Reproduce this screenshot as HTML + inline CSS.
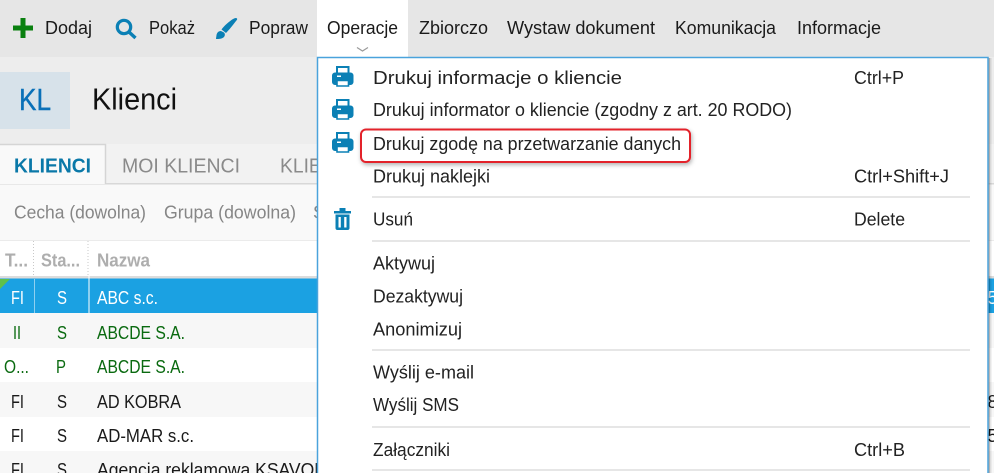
<!DOCTYPE html>
<html><head><meta charset="utf-8"><style>
html,body{margin:0;padding:0;background:#fff;width:994px;height:473px;overflow:hidden}
svg{display:block}
text{font-family:"Liberation Sans",sans-serif;font-size:18px;fill:#1a1a1a}
.m{fill:#222}
.g{fill:#0a6a10}
.w{fill:#fff}
.s{stroke:#e6e6e6;stroke-width:2}
</style></head><body>
<svg width="994" height="473" viewBox="0 0 994 473" xmlns="http://www.w3.org/2000/svg">
<defs>
<g id="pr"><path fill="#fff" stroke="#0b80b5" stroke-width="2" d="M5 1h11.500v8H5z"/>
<path fill="#0b80b5" d="M3 6.500h15.500a3 3 0 0 1 3 3v6.500a3 3 0 0 1-3 3H3a3 3 0 0 1-3-3V9.500a3 3 0 0 1 3-3z"/>
<path fill="#fff" stroke="#0b80b5" stroke-width="1.600" d="M5 14.500h11.500v5.500H5z"/>
<rect x="5" y="9.500" width="4" height="1.500" fill="#fff"/></g>
<filter id="sh" x="-5%" y="-30%" width="110%" height="170%"><feDropShadow dx="1" dy="2" stdDeviation="2" flood-color="#000" flood-opacity=".3"/></filter>
</defs>
<!-- top bar -->
<rect width="994" height="57" fill="#e6e6e6"/>
<rect x="317" width="91" height="57" fill="#fff"/>
<rect x="13" y="25.500" width="20" height="5" fill="#0a800f"/><rect x="20.500" y="18" width="5" height="20" fill="#0a800f"/>
<circle cx="124" cy="27" r="6.700" fill="none" stroke="#0b80b5" stroke-width="3.200"/><path d="M129 32l6.500 6" stroke="#0b80b5" stroke-width="3.400" fill="none"/>
<path fill="#0b80b5" d="M237 18.500c-1-1-2-.5-4 .5-4 2.500-9 7-11.500 10.500l4.500 3.500c3-3 7-8 10-12 1-1 1.500-2 1-2.500zM221 31c-3 0-4 2-4.500 4-.2 2-.5 3-.5 4 3 0 6 0 8-2 1.300-1.500 1-3.500 0-4.500z"/>
<text x="45" y="34" textLength="47" lengthAdjust="spacingAndGlyphs">Dodaj</text>
<text x="149" y="34" textLength="46" lengthAdjust="spacingAndGlyphs">Pokaż</text>
<text x="249" y="34" textLength="59" lengthAdjust="spacingAndGlyphs">Popraw</text>
<text x="327" y="34" textLength="71" lengthAdjust="spacingAndGlyphs">Operacje</text>
<text x="419" y="34" textLength="69" lengthAdjust="spacingAndGlyphs">Zbiorczo</text>
<text x="507" y="34" textLength="148" lengthAdjust="spacingAndGlyphs">Wystaw dokument</text>
<text x="675" y="34" textLength="101" lengthAdjust="spacingAndGlyphs">Komunikacja</text>
<text x="797" y="34" textLength="84" lengthAdjust="spacingAndGlyphs">Informacje</text>
<path d="M357 47.500l5.500 3.500 5.500-3.500" fill="none" stroke="#9a9a9a" stroke-width="1.200"/>
<!-- header -->
<rect y="57" width="994" height="87" fill="#ededed"/>
<rect y="72" width="70" height="57" fill="#d7e2ea"/>
<text x="19" y="110" style="font-size:31px;fill:#0a70b8;stroke:#0a70b8;stroke-width:.4" textLength="32" lengthAdjust="spacingAndGlyphs">KL</text>
<text x="92" y="109.500" style="font-size:31px;fill:#111" textLength="85" lengthAdjust="spacingAndGlyphs">Klienci</text>
<!-- tabs -->
<rect y="144" width="994" height="40" fill="#f2f2f2"/>
<rect y="183" width="994" height="1.500" fill="#d8d8d8"/>
<rect y="145" width="105" height="39" fill="#f9f9f9"/>
<path d="M0 144.500H105.500V184" fill="none" stroke="#d5d5d5" stroke-width="1.500"/>
<text x="14" y="172.500" style="font-size:20px;font-weight:bold;fill:#0a78a8" textLength="77" lengthAdjust="spacingAndGlyphs">KLIENCI</text>
<text x="122" y="172.500" style="font-size:20px;fill:#8a8a8a" textLength="118" lengthAdjust="spacingAndGlyphs">MOI KLIENCI</text>
<text x="280" y="172.500" style="font-size:20px;fill:#8a8a8a" textLength="75" lengthAdjust="spacingAndGlyphs">KLIENCI</text>
<!-- filters -->
<rect y="184.500" width="994" height="56" fill="#f9f9f9"/>
<text x="14" y="218.500" style="fill:#868686" textLength="132" lengthAdjust="spacingAndGlyphs">Cecha (dowolna)</text>
<text x="164" y="218.500" style="fill:#868686" textLength="132" lengthAdjust="spacingAndGlyphs">Grupa (dowolna)</text>
<text x="313" y="218.500" style="fill:#868686">S</text>
<rect y="240" width="994" height="1" fill="#ebebeb"/>
<!-- table header -->
<rect y="241" width="994" height="35" fill="#fff"/>
<path d="M33.500 241v36M88 241v36" stroke="#c8c8c8" stroke-dasharray="1 2"/>
<text x="5" y="266.500" style="fill:#aeaeae;font-weight:bold" textLength="23" lengthAdjust="spacingAndGlyphs">T...</text>
<text x="41" y="266.500" style="fill:#aeaeae;font-weight:bold" textLength="39" lengthAdjust="spacingAndGlyphs">Sta...</text>
<text x="97" y="266.500" style="fill:#aeaeae;font-weight:bold" textLength="53" lengthAdjust="spacingAndGlyphs">Nazwa</text>
<rect y="276" width="994" height="3" fill="#dcdcdc"/>
<!-- rows -->
<rect y="278.500" width="994" height="34.500" fill="#1ba1e2"/>
<rect y="313" width="994" height="35" fill="#f7f7f7"/>
<rect y="382" width="994" height="35" fill="#f7f7f7"/>
<rect y="451" width="994" height="22" fill="#f7f7f7"/>
<path d="M0 279h10l-10 10z" fill="#5fc04a"/>
<rect x="34" y="279" width="1" height="34" fill="#8fd0f0"/><rect x="88.500" y="276" width="1" height="37" fill="#fff"/>
<text class="w" x="11" y="304" textLength="13" lengthAdjust="spacingAndGlyphs">FI</text><text class="w" x="57" y="304" textLength="10" lengthAdjust="spacingAndGlyphs">S</text><text class="w" x="97" y="304" textLength="61" lengthAdjust="spacingAndGlyphs">ABC s.c.</text>
<text class="g" x="13" y="339" textLength="8" lengthAdjust="spacingAndGlyphs">II</text><text class="g" x="57" y="339" textLength="10" lengthAdjust="spacingAndGlyphs">S</text><text class="g" x="97" y="339" textLength="88" lengthAdjust="spacingAndGlyphs">ABCDE S.A.</text>
<text class="g" x="4" y="373" textLength="25" lengthAdjust="spacingAndGlyphs">O...</text><text class="g" x="56" y="373" textLength="10" lengthAdjust="spacingAndGlyphs">P</text><text class="g" x="97" y="373" textLength="88" lengthAdjust="spacingAndGlyphs">ABCDE S.A.</text>
<text x="11" y="408" textLength="13" lengthAdjust="spacingAndGlyphs">FI</text><text x="57" y="408" textLength="10" lengthAdjust="spacingAndGlyphs">S</text><text x="97" y="408" textLength="84" lengthAdjust="spacingAndGlyphs">AD KOBRA</text>
<text x="11" y="442" textLength="13" lengthAdjust="spacingAndGlyphs">FI</text><text x="57" y="442" textLength="10" lengthAdjust="spacingAndGlyphs">S</text><text x="97" y="442" textLength="97" lengthAdjust="spacingAndGlyphs">AD-MAR s.c.</text>
<text x="11" y="476" textLength="13" lengthAdjust="spacingAndGlyphs">FI</text><text x="57" y="476" textLength="10" lengthAdjust="spacingAndGlyphs">S</text><text x="97" y="476" textLength="230" lengthAdjust="spacingAndGlyphs">Agencja reklamowa KSAVON</text>
<text class="w" x="987.500" y="304">5</text>
<text x="987.500" y="408">8</text>
<text x="987.500" y="442">5</text>
<!-- menu -->
<rect x="988.500" y="58" width="1.500" height="415" fill="#000" opacity=".28"/>
<rect x="990" y="58" width="1.500" height="415" fill="#000" opacity=".1"/>
<rect x="317.500" y="57.500" width="670.500" height="430" fill="#fff" stroke="#4aa3dc" stroke-width="1.500"/>
<use href="#pr" x="332" y="66"/>
<use href="#pr" x="332" y="99"/>
<use href="#pr" x="332" y="132"/>
<g fill="#0b80b5"><path d="M334 211h17v2.500h-17zM339.500 208h6v3h-6z"/><path fill-rule="evenodd" d="M335.500 214.500h14v13.500a2 2 0 0 1-2 2h-10a2 2 0 0 1-2-2zM338.500 217v10.500h2.300V217zM344.200 217v10.500h2.300V217z"/></g>
<rect x="361" y="129.500" width="329" height="32.500" rx="5" fill="#fff" stroke="#e3202a" stroke-width="2" filter="url(#sh)"/>
<text class="m" x="373" y="84" textLength="249" lengthAdjust="spacingAndGlyphs">Drukuj informacje o kliencie</text>
<text class="m" x="373" y="116" textLength="419" lengthAdjust="spacingAndGlyphs">Drukuj informator o kliencie (zgodny z art. 20 RODO)</text>
<text class="m" x="373" y="150" textLength="308" lengthAdjust="spacingAndGlyphs">Drukuj zgodę na przetwarzanie danych</text>
<text class="m" x="373" y="182.500" textLength="117" lengthAdjust="spacingAndGlyphs">Drukuj naklejki</text>
<text class="m" x="373" y="225.500" textLength="40" lengthAdjust="spacingAndGlyphs">Usuń</text>
<text class="m" x="373" y="269.500" textLength="62" lengthAdjust="spacingAndGlyphs">Aktywuj</text>
<text class="m" x="373" y="302.500" textLength="90" lengthAdjust="spacingAndGlyphs">Dezaktywuj</text>
<text class="m" x="373" y="335.500" textLength="89" lengthAdjust="spacingAndGlyphs">Anonimizuj</text>
<text class="m" x="373" y="378.500" textLength="101" lengthAdjust="spacingAndGlyphs">Wyślij e-mail</text>
<text class="m" x="373" y="411" textLength="86" lengthAdjust="spacingAndGlyphs">Wyślij SMS</text>
<text class="m" x="373" y="456" textLength="77" lengthAdjust="spacingAndGlyphs">Załączniki</text>
<text class="m" x="854" y="84" textLength="50" lengthAdjust="spacingAndGlyphs">Ctrl+P</text>
<text class="m" x="854" y="182.500" textLength="95" lengthAdjust="spacingAndGlyphs">Ctrl+Shift+J</text>
<text class="m" x="854" y="225.500" textLength="51" lengthAdjust="spacingAndGlyphs">Delete</text>
<text class="m" x="854" y="456" textLength="51" lengthAdjust="spacingAndGlyphs">Ctrl+B</text>
<path class="s" d="M372 197h598M372 241h598M372 350h598M372 427h598M372 470h598"/>
</svg>
</body></html>
